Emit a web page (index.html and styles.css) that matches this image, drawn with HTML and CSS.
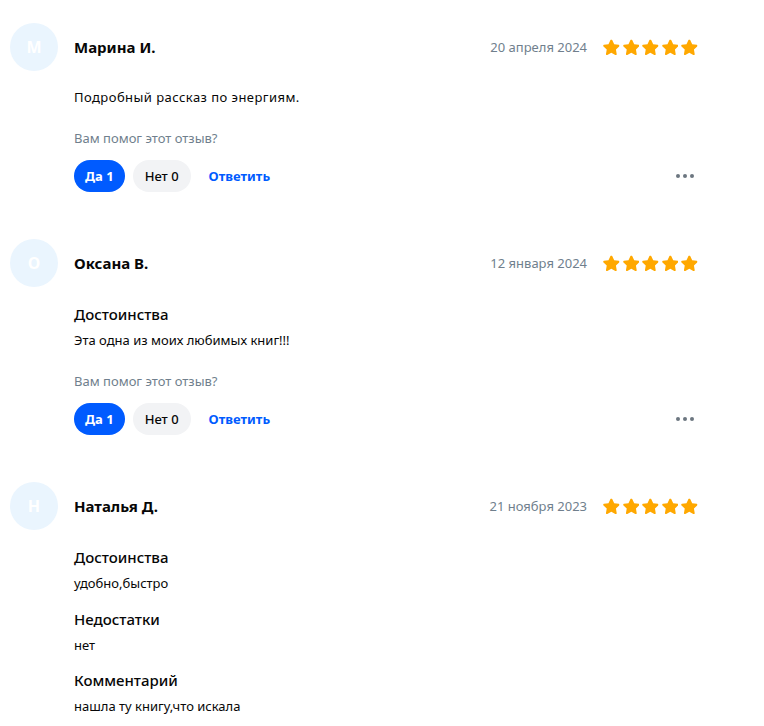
FILE: index.html
```html
<!DOCTYPE html>
<html lang="ru">
<head>
<meta charset="utf-8">
<link rel="stylesheet" href="styles.css">
</head>
<body>
<svg width="0" height="0" style="position:absolute">
  <defs>
    <symbol id="star" viewBox="2 2 20 20">
      <path d="M12 2.6c.5 0 .9.3 1.1.7l2.4 4.9 5.4.8c.9.1 1.3 1.2.6 1.9l-3.9 3.8.9 5.4c.2.9-.8 1.6-1.6 1.2L12 18.7l-4.8 2.6c-.8.4-1.8-.3-1.6-1.2l.9-5.4-3.9-3.8c-.7-.7-.3-1.8.6-1.9l5.4-.8 2.4-4.9c.2-.4.6-.7 1.1-.7z" fill="#ffa800"/>
    </symbol>
  </defs>
</svg>
<div class="list">
  <div class="review">
    <div class="avatar">М</div>
    <div class="body">
      <div class="head">
        <div class="name">Марина И.</div>
        <div class="date">20 апреля 2024</div>
        <div class="stars"><svg><use href="#star"/></svg><svg><use href="#star"/></svg><svg><use href="#star"/></svg><svg><use href="#star"/></svg><svg><use href="#star"/></svg></div>
      </div>
      <div class="content">
        <div class="block"><p class="text wide">Подробный рассказ по энергиям.</p></div>
      </div>
      <div class="question">Вам помог этот отзыв?</div>
      <div class="actions">
        <button class="btn yes">Да 1</button>
        <button class="btn no">Нет 0</button>
        <button class="reply">Ответить</button>
        <button class="more"><span></span><span></span><span></span></button>
      </div>
    </div>
  </div>

  <div class="review">
    <div class="avatar">О</div>
    <div class="body">
      <div class="head">
        <div class="name">Оксана В.</div>
        <div class="date">12 января 2024</div>
        <div class="stars"><svg><use href="#star"/></svg><svg><use href="#star"/></svg><svg><use href="#star"/></svg><svg><use href="#star"/></svg><svg><use href="#star"/></svg></div>
      </div>
      <div class="content">
        <div class="block"><h4 class="title">Достоинства</h4><p class="text">Эта одна из моих любимых книг!!!</p></div>
      </div>
      <div class="question">Вам помог этот отзыв?</div>
      <div class="actions">
        <button class="btn yes">Да 1</button>
        <button class="btn no">Нет 0</button>
        <button class="reply">Ответить</button>
        <button class="more"><span></span><span></span><span></span></button>
      </div>
    </div>
  </div>

  <div class="review">
    <div class="avatar">Н</div>
    <div class="body">
      <div class="head">
        <div class="name">Наталья Д.</div>
        <div class="date">21 ноября 2023</div>
        <div class="stars"><svg><use href="#star"/></svg><svg><use href="#star"/></svg><svg><use href="#star"/></svg><svg><use href="#star"/></svg><svg><use href="#star"/></svg></div>
      </div>
      <div class="content">
        <div class="block"><h4 class="title">Достоинства</h4><p class="text">удобно,быстро</p></div>
        <div class="block"><h4 class="title">Недостатки</h4><p class="text">нет</p></div>
        <div class="block"><h4 class="title">Комментарий</h4><p class="text">нашла ту книгу,что искала</p></div>
      </div>
    </div>
  </div>
</div>
</body>
</html>
```
FILE: styles.css
```css
* { box-sizing: border-box; }
html, body { margin: 0; padding: 0; background: #fff; }
body {
  font-family: "Noto Sans", "DejaVu Sans", sans-serif;
  color: #070707;
}
.list {
  width: 698px;
  padding: 23px 0 0 10px;
  display: flex;
  flex-direction: column;
  gap: 47px;
}
.review {
  display: flex;
  gap: 16px;
  align-items: flex-start;
}
.avatar {
  flex: none;
  width: 48px;
  height: 48px;
  border-radius: 50%;
  background: #eaf5fe;
  color: #fff;
  font-weight: 700;
  font-size: 16px;
  display: flex;
  align-items: center;
  justify-content: center;
}
.body { flex: 1; min-width: 0; }
.head {
  height: 48px;
  display: flex;
  align-items: center;
}
.name {
  font-weight: 700;
  font-size: 15px;
  flex: 1;
}
.date {
  font-size: 13px;
  color: #707f8d;
  margin-right: 16px;
}
.stars { display: flex; gap: 3px; }
.stars svg { width: 16.6px; height: 16.6px; display: block; }
.content {
  padding-top: 17px;
  display: flex;
  flex-direction: column;
  gap: 16.5px;
}
.title {
  margin: 0 0 7px;
  font-size: 15px;
  font-weight: 500;
  line-height: 20px;
}
.text {
  margin: 0;
  font-size: 13px;
  line-height: 18px;
}
.text.wide { letter-spacing: 0.45px; }
.question {
  margin-top: 23px;
  font-size: 13px;
  line-height: 18px;
  color: #707f8d;
}
.actions {
  margin-top: 13px;
  display: flex;
  align-items: center;
  gap: 8px;
}
.btn {
  border: 0;
  height: 32px;
  border-radius: 16px;
  padding: 0 11px;
  font-family: inherit;
  font-size: 13px;
  font-weight: 700;
}
.yes { background: #005bff; color: #fff; }
.no { background: #f2f3f5; color: #070707; font-weight: 500; padding: 0 12px; }
.reply {
  border: 0;
  background: none;
  color: #005bff;
  font-family: inherit;
  font-size: 13px;
  font-weight: 700;
  padding: 0 0 0 10px;
  margin-right: auto;
}
.more {
  border: 0;
  background: none;
  width: 26px;
  height: 24px;
  padding: 0;
  display: flex;
  align-items: center;
  justify-content: center;
  gap: 3px;
  margin-right: 0;
}
.more span {
  width: 4px;
  height: 4px;
  border-radius: 50%;
  background: #6c7680;
}
```
